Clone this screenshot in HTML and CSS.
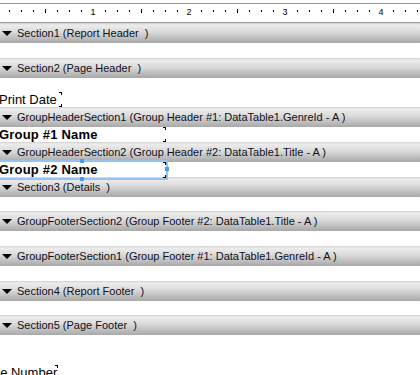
FILE: index.html
```html
<!DOCTYPE html>
<html lang="en">
<head>
    <meta charset="UTF-8">
    <title>Report Designer</title>
    <link rel="stylesheet" href="styles.css">
</head>
<body>
<!--标尺-->
<div class="ruler">
    <svg width="420" height="18" viewBox="0 0 420 18">
        <g fill="#000">
            <rect x="9" y="6" width="1" height="2"/><rect x="21" y="6" width="1" height="2"/><rect x="33" y="6" width="1" height="2"/>
            <rect x="45" y="5" width="1" height="4"/>
            <rect x="57" y="6" width="1" height="2"/><rect x="69" y="6" width="1" height="2"/><rect x="81" y="6" width="1" height="2"/>
            <rect x="105" y="6" width="1" height="2"/><rect x="117" y="6" width="1" height="2"/><rect x="129" y="6" width="1" height="2"/>
            <rect x="141" y="5" width="1" height="4"/>
            <rect x="153" y="6" width="1" height="2"/><rect x="165" y="6" width="1" height="2"/><rect x="177" y="6" width="1" height="2"/>
            <rect x="201" y="6" width="1" height="2"/><rect x="213" y="6" width="1" height="2"/><rect x="225" y="6" width="1" height="2"/>
            <rect x="237" y="5" width="1" height="4"/>
            <rect x="249" y="6" width="1" height="2"/><rect x="261" y="6" width="1" height="2"/><rect x="273" y="6" width="1" height="2"/>
            <rect x="297" y="6" width="1" height="2"/><rect x="309" y="6" width="1" height="2"/><rect x="321" y="6" width="1" height="2"/>
            <rect x="333" y="5" width="1" height="4"/>
            <rect x="345" y="6" width="1" height="2"/><rect x="357" y="6" width="1" height="2"/><rect x="369" y="6" width="1" height="2"/>
            <rect x="393" y="6" width="1" height="2"/><rect x="405" y="6" width="1" height="2"/><rect x="417" y="6" width="1" height="2"/>
        </g>
        <g class="ruler-num" text-anchor="middle">
            <text x="93" y="11">1</text>
            <text x="189" y="11">2</text>
            <text x="285" y="11">3</text>
            <text x="381" y="11">4</text>
        </g>
    </svg>
</div>

<!--报表区-->
<div class="report">
    <div class="band"><span class="arrow"></span>Section1 (Report Header&nbsp; )</div>
    <div class="area h15"></div>

    <div class="band"><span class="arrow"></span>Section2 (Page Header&nbsp; )</div>
    <div class="area h29">
        <div class="field print-date">Print Date</div>
    </div>

    <div class="band"><span class="arrow"></span>GroupHeaderSection1 (Group Header #1: DataTable1.GenreId - A )</div>
    <div class="area h15">
        <div class="field group-name">Group #1 Name</div>
    </div>

    <div class="band"><span class="arrow"></span>GroupHeaderSection2 (Group Header #2: DataTable1.Title - A )</div>
    <div class="area h15 front">
        <div class="field group-name selected">Group #2 Name
            <span class="handle handle-top"></span>
            <span class="handle handle-right"></span>
            <span class="handle handle-bottom"></span>
        </div>
    </div>

    <div class="band"><span class="arrow"></span>Section3 (Details&nbsp; )</div>
    <div class="area h14"></div>

    <div class="band"><span class="arrow"></span>GroupFooterSection2 (Group Footer #2: DataTable1.Title - A )</div>
    <div class="area h15"></div>

    <div class="band"><span class="arrow"></span>GroupFooterSection1 (Group Footer #1: DataTable1.GenreId - A )</div>
    <div class="area h15"></div>

    <div class="band"><span class="arrow"></span>Section4 (Report Footer&nbsp; )</div>
    <div class="area h14"></div>

    <div class="band"><span class="arrow"></span>Section5 (Page Footer&nbsp; )</div>
    <div class="area h40">
        <div class="field page-number">Page Number</div>
    </div>
</div>
</body>
</html>
```

FILE: styles.css
```css
html, body {
    margin: 0;
    padding: 0;
    background-color: #fff;
    overflow: hidden;
}

body {
    width: 420px;
    height: 375px;
    font-family: "Liberation Sans", Arial, sans-serif;
}

/*标尺*/
.ruler {
    margin-top: 3px;
    height: 18px;
    border-top: 1px solid #9c9c9c;
    border-bottom: 1px solid #9c9c9c;
}

.ruler svg {
    display: block;
}

.ruler-num {
    font-family: "Liberation Sans", Arial, sans-serif;
    font-size: 9px;
    fill: #000;
}

/*分节条*/
.band {
    height: 20px;
    line-height: 20px;
    font-size: 11px;
    color: #10101c;
    white-space: nowrap;
    display: flex;
    align-items: center;
    background: linear-gradient(to bottom, #cfcfcf 0, #ededed 10%, #dadada 45%, #a8a8a8 100%);
}

.band .arrow {
    width: 0;
    height: 0;
    border-left: 5px solid transparent;
    border-right: 5px solid transparent;
    border-top: 5px solid #000;
    margin-left: 2px;
    margin-right: 5px;
}

/*分节内容*/
.area {
    position: relative;
    background-color: #fff;
}

.area.front {
    z-index: 2;
}

.h14 { height: 14px; }
.h15 { height: 15px; }
.h29 { height: 29px; }
.h40 { height: 40px; }

.field {
    position: absolute;
    height: 15px;
    line-height: 15px;
    font-size: 13px;
    color: #000;
    padding-left: 1px;
    box-sizing: border-box;
    white-space: nowrap;
}

/*右侧角标*/
.field::before,
.field::after {
    content: "";
    position: absolute;
    right: 0;
    width: 2px;
    height: 2px;
    border-right: 1px solid #000;
}

.field::before {
    top: 0;
    border-top: 1px solid #000;
}

.field::after {
    bottom: 0;
    border-bottom: 1px solid #000;
}

.print-date {
    left: -2px;
    top: 14px;
    width: 64px;
}

.group-name {
    left: -2px;
    top: 0;
    width: 168px;
    font-weight: bold;
    letter-spacing: 0.2px;
}

.group-name.selected {
    height: 16px;
    line-height: 16px;
    outline: 2px solid #94c2f3;
}

.handle {
    position: absolute;
    width: 4px;
    height: 4px;
    background-color: #4a9bef;
}

.handle-top {
    left: 82px;
    top: -3px;
}

.handle-right {
    right: -3px;
    top: 5px;
}

.handle-bottom {
    left: 82px;
    bottom: -3px;
}

.page-number {
    left: -24px;
    top: 30px;
    width: 82px;
}
```
